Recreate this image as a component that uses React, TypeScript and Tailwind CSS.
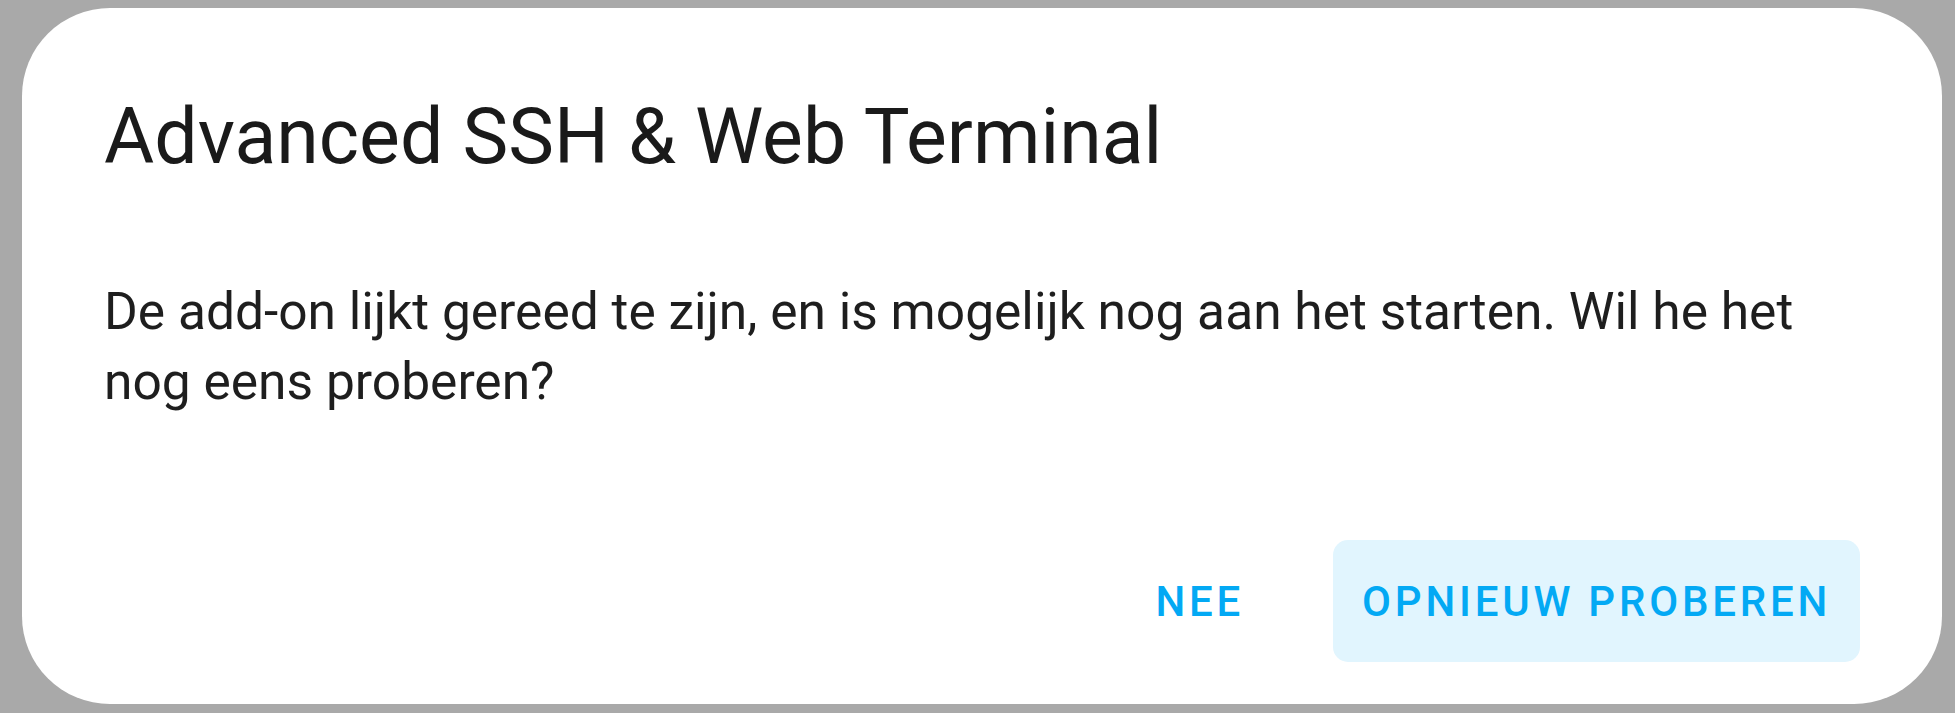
import React from 'react';

export default function App() {
  return (
    <div className="flex h-[713px] w-full bg-[#a9a9a9] pt-[8px] pl-[22px] pr-[13px] pb-[9px] font-['Roboto',sans-serif]">
      {/* Dialog */}
      <div className="flex flex-1 flex-col rounded-[88px] bg-white px-[82px] pt-[85px] pb-[42px]">
        <h2 className="text-[77px] leading-[88px] font-normal text-[#1a1a1a]">
          Advanced SSH &amp; Web Terminal
        </h2>
        <p className="mt-[96px] text-[51.5px] leading-[70px] text-[#1e1e1e]">
          De add-on lijkt gereed te zijn, en is mogelijk nog aan het starten. Wil he het nog eens proberen?
        </p>
        <div className="mt-auto flex items-center justify-end gap-[32px]">
          <button className="h-[122px] rounded-[15px] px-[57px] text-[42px] font-medium tracking-[0.09em] text-[#03a9f4]">
            NEE
          </button>
          <button className="h-[122px] rounded-[15px] bg-[#e1f5fe] px-[29px] text-[42px] font-medium tracking-[0.09em] text-[#03a9f4]">
            OPNIEUW PROBEREN
          </button>
        </div>
      </div>
    </div>
  );
}
